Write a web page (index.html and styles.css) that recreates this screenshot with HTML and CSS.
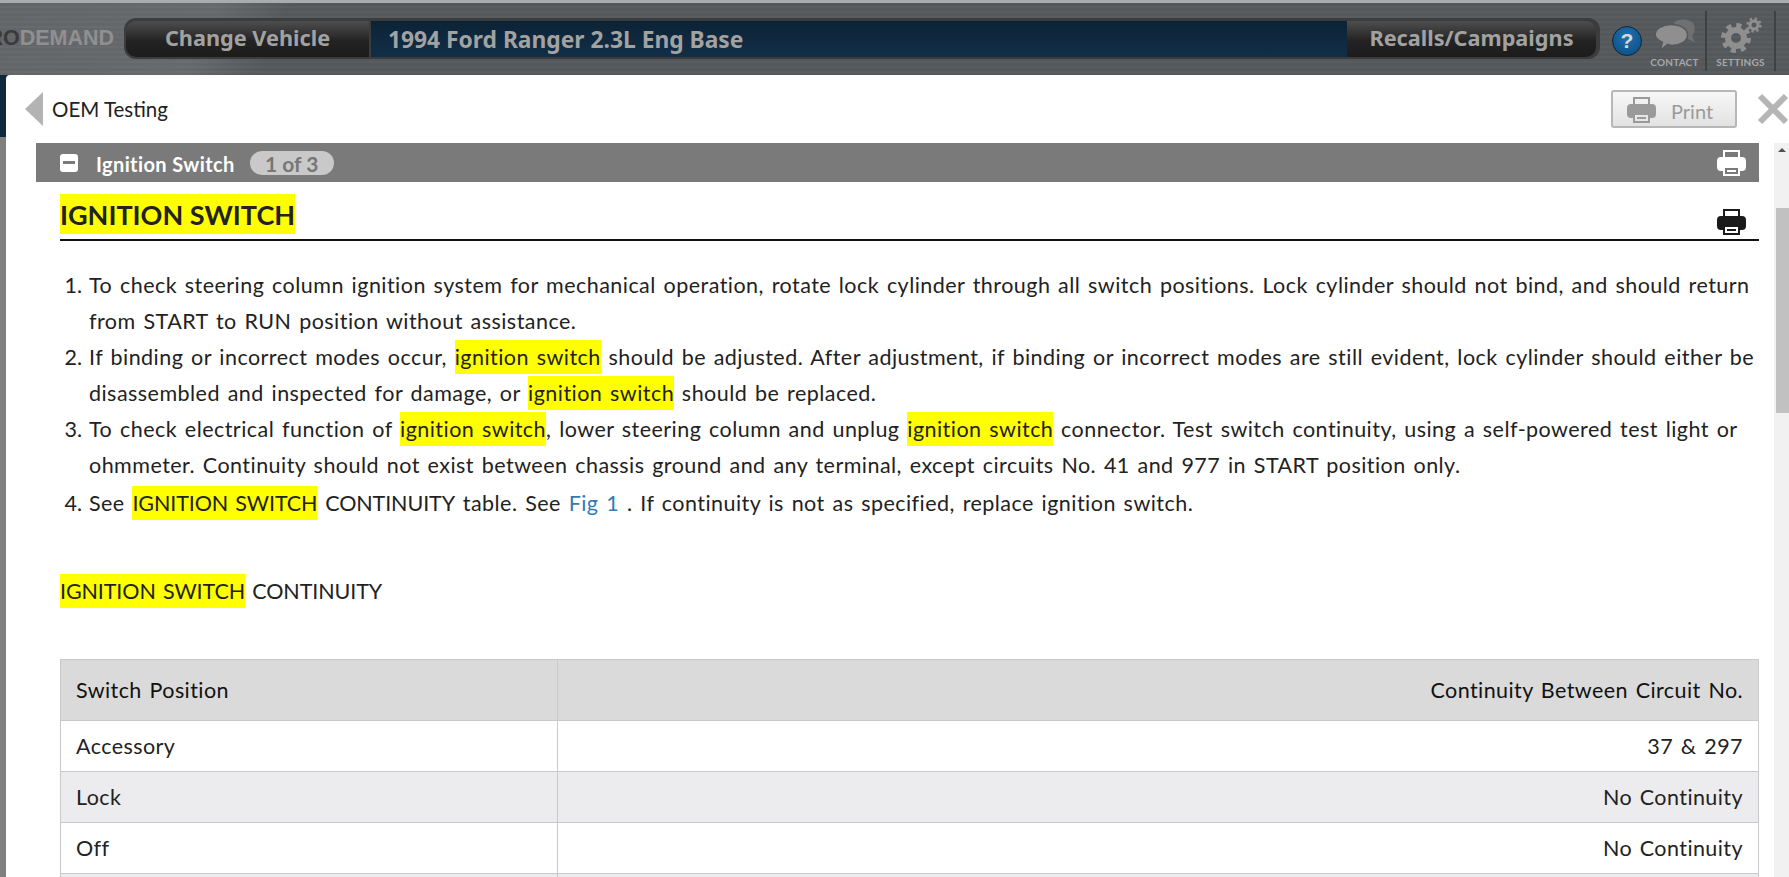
FILE: index.html
```html
<!DOCTYPE html>
<html lang="en">
<head>
<meta charset="utf-8">
<title>OEM Testing</title>
<link rel="stylesheet" href="styles.css">
</head>
<body>
<div class="page">
  <header class="topbar">
    <div class="logo"><span class="logo-pro">PRO</span><span>DEMAND</span></div>
    <nav class="vehicle-bar">
      <div class="bar-btn bar-left">Change Vehicle</div>
      <div class="bar-title">1994 Ford Ranger 2.3L Eng Base</div>
      <div class="bar-btn bar-right">Recalls/Campaigns</div>
    </nav>
    <div class="help">?</div>
    <div class="tool tool-contact">
      <svg class="tool-icon" width="44" height="34" viewBox="0 0 42 32">
        <path fill="#6f7072" d="M20 3c4-4 16-4 19 2 2 5 0 9-2 11l3 6-9-4c-5 0-10-5-11-15z"/>
        <path fill="#8f8f8f" stroke="#55585b" stroke-width="1.5" d="M17 5c9 0 16 4 16 10s-7 10-15 10c-2 0-3 0-4-1l-7 6 2-8C5 20 2 18 2 15 2 9 9 5 17 5z"/>
      </svg>
      <span class="tool-label">CONTACT</span>
    </div>
    <div class="tool tool-settings">
      <svg class="tool-icon" width="44" height="36" viewBox="0 0 44 36">
        <g fill="none" stroke="#8f8f8f">
          <circle cx="17" cy="21" r="8" stroke-width="6"/>
          <circle cx="17" cy="21" r="12.5" stroke-width="5" stroke-dasharray="5 4.8"/>
          <circle cx="35" cy="8" r="4" stroke-width="3"/>
          <circle cx="35" cy="8" r="6.4" stroke-width="2.4" stroke-dasharray="2.4 2.6"/>
        </g>
      </svg>
      <span class="tool-label">SETTINGS</span>
    </div>
    <div class="tool tool-last"><span class="tool-label">LOGOUT</span></div>
  </header>

  <main class="modal">
    <div class="modal-head">
      <span class="back-arrow"></span>
      <span class="modal-title">OEM Testing</span>
      <button class="print-btn">
        <svg class="printer" width="29" height="26" viewBox="0 0 29 26"><path fill-rule="evenodd" d="M6 0h17v7h2a4 4 0 0 1 4 4v6a4 4 0 0 1-4 4h-2v5H6v-5H4a4 4 0 0 1-4-4v-6a4 4 0 0 1 4-4h2zM8 2v5h13V2zM8 18v6h13v-6zM10 20h9v2h-9z"/></svg>
        <span class="print-label">Print</span>
      </button>
      <svg class="close" width="32" height="32" viewBox="0 0 32 32"><path d="M3 3l26 26M29 3L3 29" stroke="#b5b5b5" stroke-width="6" fill="none"/></svg>
    </div>

    <div class="body-row">
      <section class="doc">
        <div class="doc-bar">
          <span class="collapse"></span>
          <span class="doc-name">Ignition Switch</span>
          <span class="pill">1 of 3</span>
          <svg class="printer printer-white" width="29" height="26" viewBox="0 0 29 26"><path fill-rule="evenodd" d="M6 0h17v7h2a4 4 0 0 1 4 4v6a4 4 0 0 1-4 4h-2v5H6v-5H4a4 4 0 0 1-4-4v-6a4 4 0 0 1 4-4h2zM8 2v5h13V2zM8 18v6h13v-6zM10 20h9v2h-9z"/></svg>
        </div>

        <div class="doc-heading">
          <h1 class="heading"><mark class="hl-big">IGNITION SWITCH</mark></h1>
          <svg class="printer printer-black" width="29" height="26" viewBox="0 0 29 26"><path fill-rule="evenodd" d="M6 0h17v7h2a4 4 0 0 1 4 4v6a4 4 0 0 1-4 4h-2v5H6v-5H4a4 4 0 0 1-4-4v-6a4 4 0 0 1 4-4h2zM8 2v5h13V2zM8 18v6h13v-6zM10 20h9v2h-9z"/></svg>
        </div>

        <ol class="steps">
          <li>To check steering column ignition system for mechanical operation, rotate lock cylinder through all switch positions. Lock cylinder should not bind, and should return from START to RUN position without assistance.</li>
          <li>If binding or incorrect modes occur, <mark>ignition switch</mark> should be adjusted. After adjustment, if binding or incorrect modes are still evident, lock cylinder should either be disassembled and inspected for damage, or <mark>ignition switch</mark> should be replaced.</li>
          <li>To check electrical function of <mark>ignition switch</mark>, lower steering column and unplug <mark>ignition switch</mark> connector. Test switch continuity, using a self-powered test light or ohmmeter. Continuity should not exist between chassis ground and any terminal, except circuits No. 41 and 977 in START position only.</li>
          <li class="step-last">See <mark class="caps">IGNITION SWITCH</mark> <span class="caps">CONTINUITY</span> table. See <a class="fig" href="#">Fig 1</a> . If continuity is not as specified, replace ignition switch.</li>
        </ol>

        <p class="table-title"><mark class="caps">IGNITION SWITCH</mark> <span class="caps">CONTINUITY</span></p>

        <table class="grid">
          <thead>
            <tr><th>Switch Position</th><th>Continuity Between Circuit No.</th></tr>
          </thead>
          <tbody>
            <tr><td>Accessory</td><td>37 &amp; 297</td></tr>
            <tr><td>Lock</td><td>No Continuity</td></tr>
            <tr><td>Off</td><td>No Continuity</td></tr>
            <tr><td></td><td></td></tr>
          </tbody>
        </table>
      </section>

      <div class="scrollbar">
        <span class="scroll-up"></span>
        <span class="scroll-thumb"></span>
      </div>
    </div>
  </main>
</div>
</body>
</html>
```
FILE: styles.css
```css
* { box-sizing: border-box; }
html, body { margin: 0; height: 100%; overflow: hidden; }
body { font-family: Lato, "Liberation Sans", sans-serif; color: #222; }

.page {
  width: 1789px;
  height: 877px;
  display: flex;
  flex-direction: column;
  overflow: hidden;
  background: linear-gradient(#10283c 0, #10283c 137px, #808080 137px);
}

/* Top bar */
.topbar {
  flex: none;
  height: 75px;
  display: flex;
  align-items: flex-start;
  border-top: 3px solid #a9abad;
  padding-top: 15px;
  background:
    linear-gradient(115deg, rgba(255,255,255,.08) 0, rgba(255,255,255,.1) 12%, rgba(255,255,255,0) 16%),
    repeating-linear-gradient(#55585b 0, #55585b 3px, #5a5d60 3px, #5a5d60 5px);
}
.logo {
  width: 114px;
  height: 41px;
  display: flex;
  justify-content: flex-end;
  align-items: center;
  overflow: hidden;
  flex: none;
  font: 700 21.5px "Liberation Sans", sans-serif;
  color: #909090;
}
.logo-pro { color: #3a3a3a; }
.vehicle-bar {
  flex: none;
  margin-left: 10px;
  width: 1476px;
  height: 41px;
  padding: 3px 4px 2px 2px;
  display: flex;
  border-radius: 12px;
  background: #3a3c3e;
  font: 700 21.7px "Noto Sans", sans-serif;
  color: #a2a2a2;
}
.bar-btn {
  display: flex;
  align-items: center;
  justify-content: center;
  padding-bottom: 4px;
  background: linear-gradient(#4e4e4e, #232323 55%, #1c1c1c);
}
.bar-left { width: 243px; border-radius: 10px 0 0 10px; margin-right: 2px; }
.bar-right { flex: 1; border-radius: 0 10px 10px 0; }
.bar-title {
  width: 976px;
  padding: 0 0 0 17px;
  display: flex;
  align-items: center;
  font-size: 22.8px;
  background: linear-gradient(#0c2336, #122e47);
}
.help {
  flex: none;
  width: 30px;
  height: 30px;
  margin: 8px 0 0 12px;
  border-radius: 50%;
  border: 1px solid #10243a;
  background: radial-gradient(circle at 50% 35%, #1f72b0, #0a4a80);
  color: #d8d8d8;
  font: 700 21px/28px "Liberation Sans", sans-serif;
  text-align: center;
}
.tool {
  flex: none;
  height: 60px;
  margin-top: -7px;
  display: flex;
  flex-direction: column;
  align-items: center;
  justify-content: flex-end;
  border-right: 2px solid #3f4143;
  padding-bottom: 2px;
}
.tool-contact { width: 65px; padding-left: 2px; }
.tool-settings { width: 69px; }
.tool-last { width: 60px; border: 0; padding-left: 13px; align-items: flex-start; }
.tool-icon { margin-bottom: 2px; }
.tool-label { font: 700 10px/14px Lato, sans-serif; color: #a8a8a8; letter-spacing: .2px; }

/* Modal */
.modal {
  flex: 1;
  min-height: 0;
  margin-left: 6px;
  background: #fff;
  border-radius: 4px 0 0 0;
  display: flex;
  flex-direction: column;
}
.modal-head {
  flex: none;
  height: 68px;
  display: flex;
  align-items: center;
  padding-left: 19px;
}
.back-arrow {
  width: 0;
  height: 0;
  border-style: solid;
  border-width: 17px 18px 17px 0;
  border-color: transparent #b3b3b3 transparent transparent;
}
.modal-title { margin-left: 9px; font-size: 20.5px; }
.print-btn {
  margin-left: auto;
  width: 126px;
  height: 38px;
  display: flex;
  align-items: center;
  gap: 15px;
  padding: 2px 0 0 14px;
  border: 2px solid #b7b7b7;
  border-radius: 3px;
  background: linear-gradient(#f7f7f7, #e2e2e2);
  color: #9a9a9a;
  font: 400 20px Lato, sans-serif;
}
.print-label { padding-top: 2px; }
.printer { flex: none; fill: currentColor; }
.close { flex: none; margin-left: 20px; }

.body-row {
  flex: 1;
  min-height: 0;
  display: flex;
  gap: 15px;
  margin-left: 30px;
}
.doc { width: 1723px; flex: none; }
.doc-bar {
  height: 39px;
  display: flex;
  align-items: center;
  padding: 0 13px 0 24px;
  background: #7a7a7a;
}
.collapse {
  flex: none;
  width: 18px;
  height: 18px;
  border-radius: 3px;
  background: linear-gradient(#7a7a7a, #7a7a7a) center / 12px 3px no-repeat #fff;
}
.doc-name { margin-left: 18px; padding-top: 3px; font-weight: 700; font-size: 20px; letter-spacing: .4px; color: #fff; }
.pill {
  margin-left: 15px;
  width: 84px;
  height: 24px;
  border-radius: 12px;
  background: #c9c9c9;
  color: #777;
  font-weight: 700;
  font-size: 21px;
  line-height: 26px;
  text-align: center;
}
.printer-white { margin-left: auto; color: #fff; }

.doc-heading {
  height: 59px;
  margin-left: 24px;
  padding: 12px 13px 0 0;
  display: flex;
  justify-content: space-between;
  align-items: flex-end;
  border-bottom: 2px solid #111;
}
.heading { margin: 0; font-size: 27px; line-height: 42px; font-weight: 700; color: #222; align-self: flex-start; }
.printer-black { color: #1a1a1a; margin-bottom: 4px; }

mark {
  background: #ff0;
  color: inherit;
  padding: 4px 0;
}
.hl-big { padding: 4px 0 3px; }
.caps { letter-spacing: -.1px; }

.steps {
  margin: 26px 0 0 24px;
  padding: 0 0 0 29px;
  list-style: none;
  counter-reset: step;
  font-size: 21.5px;
  letter-spacing: .46px;
  word-spacing: 1.8px;
  line-height: 36px;
}
.steps li { position: relative; counter-increment: step; }
.steps li::before {
  content: counter(step) ".";
  position: absolute;
  right: 100%;
  margin-right: 7px;
  letter-spacing: 0;
}
.step-last { margin-top: 2px; }
.fig { color: #337ab7; text-decoration: none; }

.table-title { margin: 52px 0 0 24px; font-size: 21.5px; word-spacing: 1.8px; line-height: 36px; }

.grid {
  margin: 50px 0 0 24px;
  width: 1699px;
  border-collapse: collapse;
  table-layout: fixed;
  font-size: 21.5px;
  letter-spacing: .42px;
  word-spacing: 1.8px;
}
.grid th, .grid td {
  border: 1px solid #c9c9c9;
  padding: 0 15px;
  text-align: left;
  font-weight: 400;
}
.grid th { height: 61px; background: #dadada; color: #111; }
.grid td { height: 51px; }
.grid th:first-child, .grid td:first-child { width: 497px; }
.grid th:last-child, .grid td:last-child { text-align: right; }
.grid tbody tr:nth-child(even) td { background: #ececee; }

.scrollbar {
  flex: none;
  width: 15px;
  background: #f1f1f1;
  display: flex;
  flex-direction: column;
  align-items: flex-end;
  padding-top: 5px;
}
.scroll-up {
  width: 0;
  height: 0;
  margin-right: 3px;
  border-style: solid;
  border-width: 0 4px 4px;
  border-color: transparent transparent #505050;
}
.scroll-thumb {
  margin-top: 56px;
  width: 13px;
  height: 205px;
  background: #c1c1c1;
}
```
